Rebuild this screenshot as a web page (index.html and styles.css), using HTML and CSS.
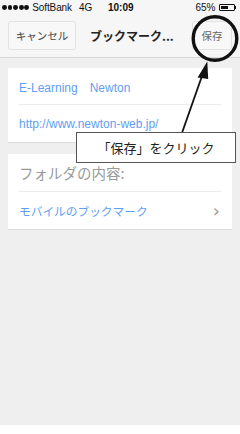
FILE: index.html
```html
<!DOCTYPE html>
<html lang="ja">
<head>
<meta charset="utf-8">
<link rel="stylesheet" href="styles.css">
</head>
<body>
<div class="screen">
  <div class="status">
    <div class="carrier">
      <span class="dots"><i></i><i></i><i></i><i></i><i></i></span>
      <span class="name">SoftBank</span>
      <span class="net">4G</span>
    </div>
    <div class="time">10:09</div>
    <div class="batt">
      <span class="pct">65%</span>
      <span class="battery"><span class="fill"></span></span><span class="nub"></span>
    </div>
  </div>
  <div class="nav">
    <div class="btn cancel">キャンセル</div>
    <div class="title">ブックマーク...</div>
    <div class="btn save">保存</div>
  </div>
  <div class="content">
    <div class="card">
      <div class="row"><div class="cell link">E-Learning　Newton</div></div>
      <div class="row"><div class="cell link last">http://www.newton-web.jp/</div></div>
    </div>
    <div class="card">
      <div class="row"><div class="cell label">フォルダの内容:</div></div>
      <div class="row"><div class="cell link jp last"><span>モバイルのブックマーク</span><span class="chev">›</span></div></div>
    </div>
  </div>
  <div class="footer"></div>

  <svg class="annot" width="240" height="434" viewBox="0 0 240 434">
    <circle cx="215" cy="38.5" r="21.8" fill="none" stroke="#111" stroke-width="3.4"/>
    <line x1="182.3" y1="132" x2="202" y2="76" stroke="#111" stroke-width="1.8"/>
    <polygon points="207.3,61.5 197.6,77.5 208.2,79" fill="#111"/>
  </svg>
  <div class="callout">「保存」をクリック</div>
</div>
</body>
</html>
```
FILE: styles.css
```css
* { box-sizing: border-box; margin: 0; padding: 0; }
html, body { width: 240px; height: 434px; overflow: hidden; }
body { font-family: "Liberation Sans", "Noto Sans CJK JP", sans-serif; background: #fff; }
.screen { position: relative; width: 240px; height: 434px; display: flex; flex-direction: column; }

.status { height: 15px; background: #f6f6f6; display: flex; align-items: center; padding: 0 4px 0 2px; font-size: 10px; color: #111; }
.carrier { display: flex; align-items: center; width: 106px; flex-shrink: 0; }
.dots { display: flex; gap: 0.8px; margin-right: 3px; }
.dots i { display: block; width: 4.8px; height: 4.8px; border-radius: 50%; background: #111; }
.name { margin-right: 7px; letter-spacing: -0.1px; }
.time { font-weight: bold; font-size: 10px; flex: 1; }
.batt { display: flex; align-items: center; }
.pct { margin-right: 3px; }
.battery { width: 16px; height: 7px; border: 1px solid #111; border-radius: 1px; padding: 1px; display: flex; }
.fill { width: 65%; background: #111; }
.nub { width: 1.5px; height: 3px; background: #111; }

.nav { height: 43px; background: #f6f6f6; border-bottom: 1px solid #d6d6d6; display: flex; align-items: center; padding: 0 8px 1px; }
.btn { flex-shrink: 0; height: 29px; border: 1px solid #e2e2e2; border-radius: 3px; background: #f8f8f8; display: flex; align-items: center; justify-content: center; font-family: "Noto Sans CJK JP", sans-serif; font-size: 10.5px; color: #444; }
.cancel { width: 68px; }
.title { flex: 1; padding-left: 14px; font-family: "Noto Sans CJK JP", sans-serif; font-weight: bold; font-size: 12px; color: #222; white-space: nowrap; overflow: hidden; }
.save { width: 40px; color: #666; }

.content { flex: 1; background: #efefef; padding: 10px 8px; display: flex; flex-direction: column; gap: 12px; }
.card { background: #fff; box-shadow: 0 1px 0 #dcdcdc; }
.row { padding: 0 11px; }
.cell { height: 37px; border-bottom: 1px solid #ececec; display: flex; align-items: center; }
.cell.last { border-bottom: none; }
.link { color: #5f9ef2; font-size: 12px; }
.jp { font-family: "Noto Sans CJK JP", sans-serif; font-size: 11.7px; justify-content: space-between; }
.label { height: 38px; font-family: "Noto Sans CJK JP", sans-serif; font-size: 14.5px; color: #9a9a9a; }
.chev { color: #9a9a9a; font-family: "DejaVu Sans", sans-serif; font-size: 18px; line-height: 1; margin-right: 1px; }

.footer { height: 9px; background: #fff; }

.annot { position: absolute; left: 0; top: 0; }
.callout { position: absolute; left: 76px; top: 132px; width: 160px; height: 31px; background: #fff; border: 1px solid #555; display: flex; align-items: center; justify-content: center; font-family: "Noto Sans CJK JP", sans-serif; font-size: 13px; color: #222; }
```
